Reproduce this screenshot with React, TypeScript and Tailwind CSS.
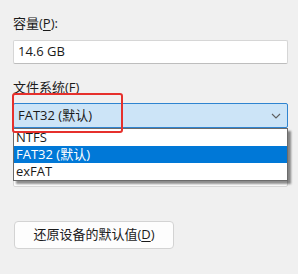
import React from "react";

const font = { fontFamily: '"Open Sans", "Noto Sans CJK SC", sans-serif' };

function Underlined({ text, k }: { text: string; k: string }) {
  return (
    <>
      {text}(<span className="underline underline-offset-2">{k}</span>)
    </>
  );
}

function Chevron() {
  return (
    <svg width="10" height="6" viewBox="0 0 10 6" className="text-[#5f5f5f]">
      <path d="M1 1l4 4 4-4" fill="none" stroke="currentColor" strokeWidth="1.1" />
    </svg>
  );
}

export default function App() {
  const options = ["NTFS", "FAT32 (默认)", "exFAT"];

  return (
    <div
      className="relative h-[274px] w-[298px] overflow-hidden bg-[#f0f0f0] pl-[13px] pr-[10px] pt-[15px] text-[13px] text-[#1a1a1a]"
      style={font}
    >
      <div className="h-[17px] leading-[17px]">
        <Underlined text="容量" k="P" />:
      </div>
      <div className="mt-[8px] flex h-[24px] items-center rounded-[2px] border border-[#d6d6d6] border-b-[#bdbdbd] bg-white pl-[4px]">
        14.6 GB
      </div>

      <div className="mt-[15px] h-[17px] leading-[17px]">
        <Underlined text="文件系统" k="F" />
      </div>

      <div className="relative mt-[7px]">
        <div className="flex h-[25px] items-center justify-between rounded-[2px] border border-[#2f84d0] bg-[#cce4f7] pl-[4px] pr-[6px]">
          <span>FAT32 (默认)</span>
          <Chevron />
        </div>

        <div className="absolute left-0 right-0 top-[25px] z-10 border border-[#6b6b6b] bg-white shadow-[3px_3px_2px_rgba(0,0,0,0.45)]">
          {options.map((o, i) => (
            <div
              key={o}
              className={
                "flex h-[17px] items-center pl-[2px] " +
                (i === 1 ? "bg-[#0078d7] text-white" : "")
              }
            >
              {o}
            </div>
          ))}
        </div>

        <div className="absolute -left-[1px] -top-[10px] z-20 h-[40px] w-[111px] rounded-[3px] border-2 border-[#e6302c]" />
      </div>

      {/* field hidden behind the open list */}
      <div className="mt-[12px] h-[17px]" />
      <div className="mt-[6px] h-[24px] rounded-[2px] border border-[#d6d6d6] bg-white" />

      <button className="mt-[34px] ml-[1px] flex h-[28px] w-[160px] items-center justify-center rounded-[4px] border border-[#d3d3d3] bg-[#fdfdfd] text-[13px] text-[#1a1a1a]">
        <Underlined text="还原设备的默认值" k="D" />
      </button>
    </div>
  );
}
